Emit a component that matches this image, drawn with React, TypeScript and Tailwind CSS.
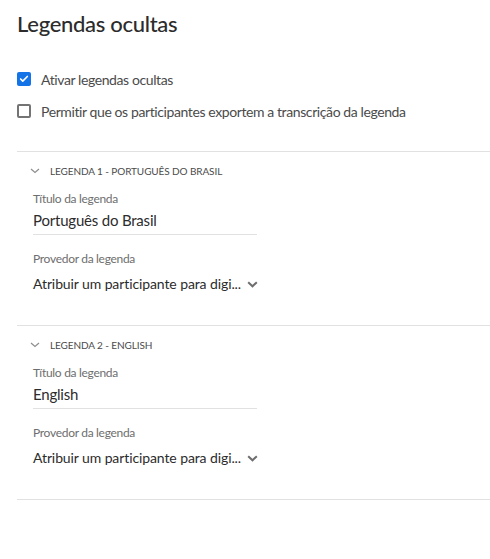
import { Check } from "lucide-react";

type Caption = {
  index: number;
  language: string;
  title: string;
  provider: string;
};

const captions: Caption[] = [
  {
    index: 1,
    language: "Português do Brasil",
    title: "Português do Brasil",
    provider: "Atribuir um participante para digi...",
  },
  {
    index: 2,
    language: "English",
    title: "English",
    provider: "Atribuir um participante para digi...",
  },
];

function Checkbox({ checked, label }: { checked: boolean; label: string }) {
  return (
    <label className="flex h-[20px] items-center gap-[10px]">
      {checked ? (
        <span className="flex h-[14px] w-[14px] items-center justify-center rounded-[2px] bg-[#1473e6]">
          <Check className="h-[10px] w-[10px] text-white" strokeWidth={4} />
        </span>
      ) : (
        <span className="h-[14px] w-[14px] rounded-[2px] border-2 border-[#747474] bg-white" />
      )}
      <span className="text-[14px] tracking-[-0.4px] text-[#4b4b4b]">{label}</span>
    </label>
  );
}

function CaptionSection({ caption }: { caption: Caption }) {
  return (
    <section className="border-b border-[#e1e1e1] pb-[32px] pl-[13px] pt-[12px]">
      <div className="flex h-[14px] items-center gap-[10px]">
        <svg width="10" height="6" viewBox="0 0 10 6" fill="none">
          <path d="M1 1 L5 4.5 L9 1" stroke="#8e8e8e" strokeWidth="1.2" />
        </svg>
        <span className="text-[10px] uppercase tracking-[-0.1px] text-[#4b4b4b]">
          Legenda {caption.index} - {caption.language}
        </span>
      </div>
      <div className="ml-[3px] mt-[13px] w-[224px]">
        <div className="text-[12px] leading-[16px] tracking-[-0.3px] text-[#6e6e6e]">Título da legenda</div>
        <div className="border-b border-[#e1e1e1] pb-[4px] pt-[4px] text-[15px] leading-[19px] tracking-[-0.2px] text-[#2c2c2c]">
          {caption.title}
        </div>
      </div>
      <div className="ml-[3px] mt-[16px] w-[224px]">
        <div className="text-[12px] leading-[16px] tracking-[-0.3px] text-[#6e6e6e]">Provedor da legenda</div>
        <div className="mt-[8px] flex items-center justify-between text-[14px] leading-[18px] tracking-[-0.1px] text-[#2c2c2c]">
          <span>{caption.provider}</span>
          <svg width="11" height="7" viewBox="0 0 11 7" fill="none" className="mr-[-1px]">
            <path d="M1.2 1.2 L5.5 5.3 L9.8 1.2" stroke="#6e6e6e" strokeWidth="2" />
          </svg>
        </div>
      </div>
    </section>
  );
}

export default function App() {
  return (
    <div
      className="min-h-[559px] w-[490px] bg-white pl-[17px] pt-[10px]"
      style={{ fontFamily: "Lato, 'Open Sans', sans-serif" }}
    >
      <h1 className="text-[22px] font-medium leading-[28px] tracking-[-0.3px] text-[#2c2c2c]">Legendas ocultas</h1>
      <div className="mt-[31px] flex flex-col gap-[12px] pb-[30px]">
        <Checkbox checked label="Ativar legendas ocultas" />
        <Checkbox checked={false} label="Permitir que os participantes exportem a transcrição da legenda" />
      </div>
      <div className="border-t border-[#e1e1e1]">
        {captions.map((c) => (
          <CaptionSection key={c.index} caption={c} />
        ))}
      </div>
    </div>
  );
}
